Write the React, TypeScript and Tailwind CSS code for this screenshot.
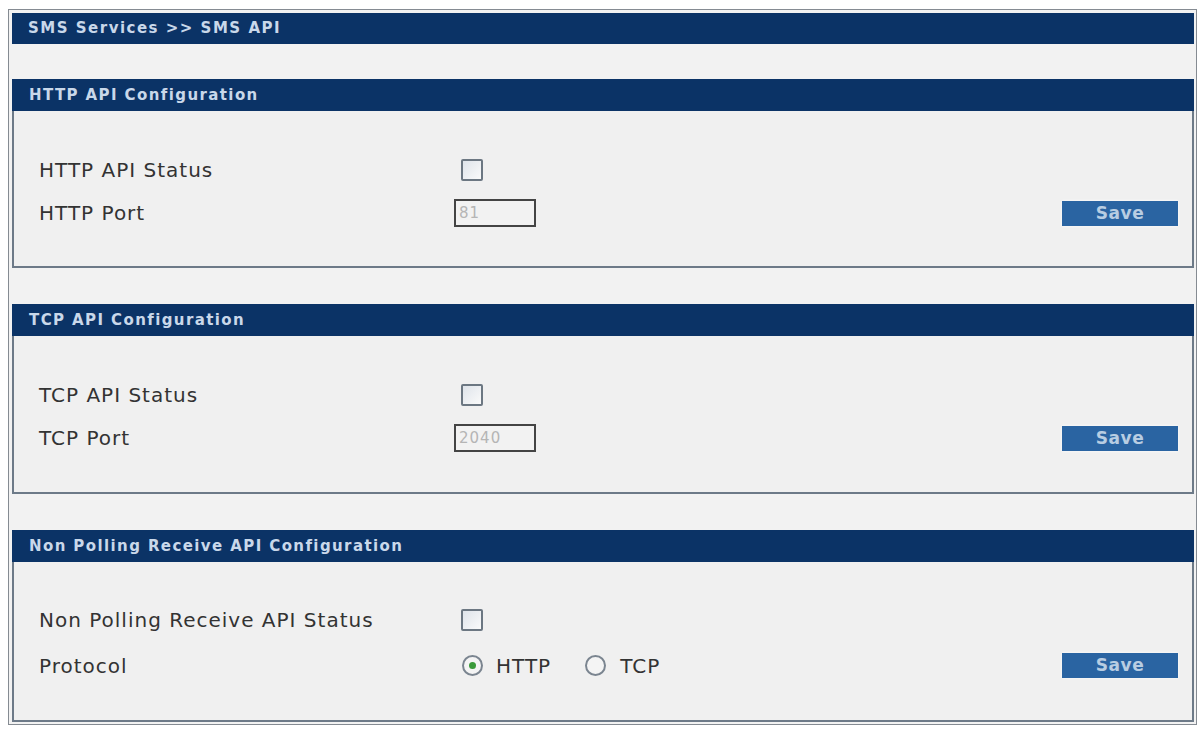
import type { ReactNode } from 'react';

const font = { fontFamily: '"DejaVu Sans", Verdana, sans-serif' };

function SectionHeader({ children }: { children: ReactNode }) {
  return (
    <div className="flex h-[32px] items-center bg-[#0b3366] pl-[17px] text-[15px] font-bold tracking-[1.4px] text-[#c9d8ea]">
      {children}
    </div>
  );
}

function Checkbox() {
  return (
    <span className="block h-[22px] w-[22px] rounded-[2px] border-2 border-[#6c7782] bg-gradient-to-br from-[#dfe4ea] to-[#fafafa]" />
  );
}

function SaveButton() {
  return (
    <button
      type="button"
      className="h-[25px] w-[116px] bg-[#2a64a2] text-[17px] font-bold leading-[25px] tracking-[0.5px] text-[#b8cde2] shadow-[0_0_3px_rgba(255,255,255,0.9)]"
    >
      Save
    </button>
  );
}

function Radio({ checked }: { checked?: boolean }) {
  return (
    <span className="flex h-[21px] w-[21px] items-center justify-center rounded-full border-2 border-[#7b8590] bg-[#f4f4f4]">
      {checked ? <span className="h-[7px] w-[7px] rounded-full bg-[#3a9a3a]" /> : null}
    </span>
  );
}

function Row({ label, control, action }: { label: string; control: ReactNode; action?: ReactNode }) {
  return (
    <div className="flex items-center">
      <div className="w-[415px] shrink-0 text-[20px] leading-[24px] tracking-[1px] text-[#333]">{label}</div>
      <div className="flex flex-1 items-center">{control}</div>
      {action}
    </div>
  );
}

function Section({
  title,
  bodyHeight,
  children,
}: {
  title: string;
  bodyHeight: string;
  children: ReactNode;
}) {
  return (
    <div>
      <SectionHeader>{title}</SectionHeader>
      <div className={`${bodyHeight} border-x-2 border-b-2 border-[#6d7a88] bg-[#f0f0f0] pl-[25px] pr-[14px]`}>
        {children}
      </div>
    </div>
  );
}

function PortInput({ value }: { value: string }) {
  return (
    <span className="flex h-[28px] w-[82px] items-center border-2 border-[#444] bg-[#f2f2f2] pl-[3px] text-[15px] tracking-[1px] text-[#b5b5b5]">
      {value}
    </span>
  );
}

export default function App() {
  return (
    <div className="h-[729px] w-[1198px] bg-white pl-[8px] pt-[9px]" style={font}>
      <div className="h-[716px] w-[1189px] border border-[#858b92] bg-[#f2f2f2] pl-[3px] pr-[2px] pt-[3px]">
        <div className="flex h-[31px] items-center bg-[#0b3366] pl-[16px] text-[15px] font-bold tracking-[1.5px] text-[#c9d8ea]">
          SMS Services &gt;&gt; SMS API
        </div>
        <div className="mt-[35px] flex flex-col gap-[36px]">
          <Section title="HTTP API Configuration" bodyHeight="h-[157px]">
            <div className="flex flex-col pt-[47px]">
              <Row label="HTTP API Status" control={<span className="ml-[7px]"><Checkbox /></span>} />
              <div className="mt-[17px]">
                <Row label="HTTP Port" control={<PortInput value="81" />} action={<SaveButton />} />
              </div>
            </div>
          </Section>
          <Section title="TCP API Configuration" bodyHeight="h-[158px]">
            <div className="flex flex-col pt-[47px]">
              <Row label="TCP API Status" control={<span className="ml-[7px]"><Checkbox /></span>} />
              <div className="mt-[17px]">
                <Row label="TCP Port" control={<PortInput value="2040" />} action={<SaveButton />} />
              </div>
            </div>
          </Section>
          <Section title="Non Polling Receive API Configuration" bodyHeight="h-[160px]">
            <div className="flex flex-col pt-[46px]">
              <Row
                label="Non Polling Receive API Status"
                control={<span className="ml-[7px]"><Checkbox /></span>}
              />
              <div className="mt-[21px]">
                <Row
                  label="Protocol"
                  control={
                    <div className="ml-[8px] flex items-center text-[20px] leading-[24px] tracking-[1px] text-[#333]">
                      <Radio checked />
                      <span className="ml-[13px]">HTTP</span>
                      <span className="ml-[34px]">
                        <Radio />
                      </span>
                      <span className="ml-[14px]">TCP</span>
                    </div>
                  }
                  action={<SaveButton />}
                />
              </div>
            </div>
          </Section>
        </div>
      </div>
    </div>
  );
}
